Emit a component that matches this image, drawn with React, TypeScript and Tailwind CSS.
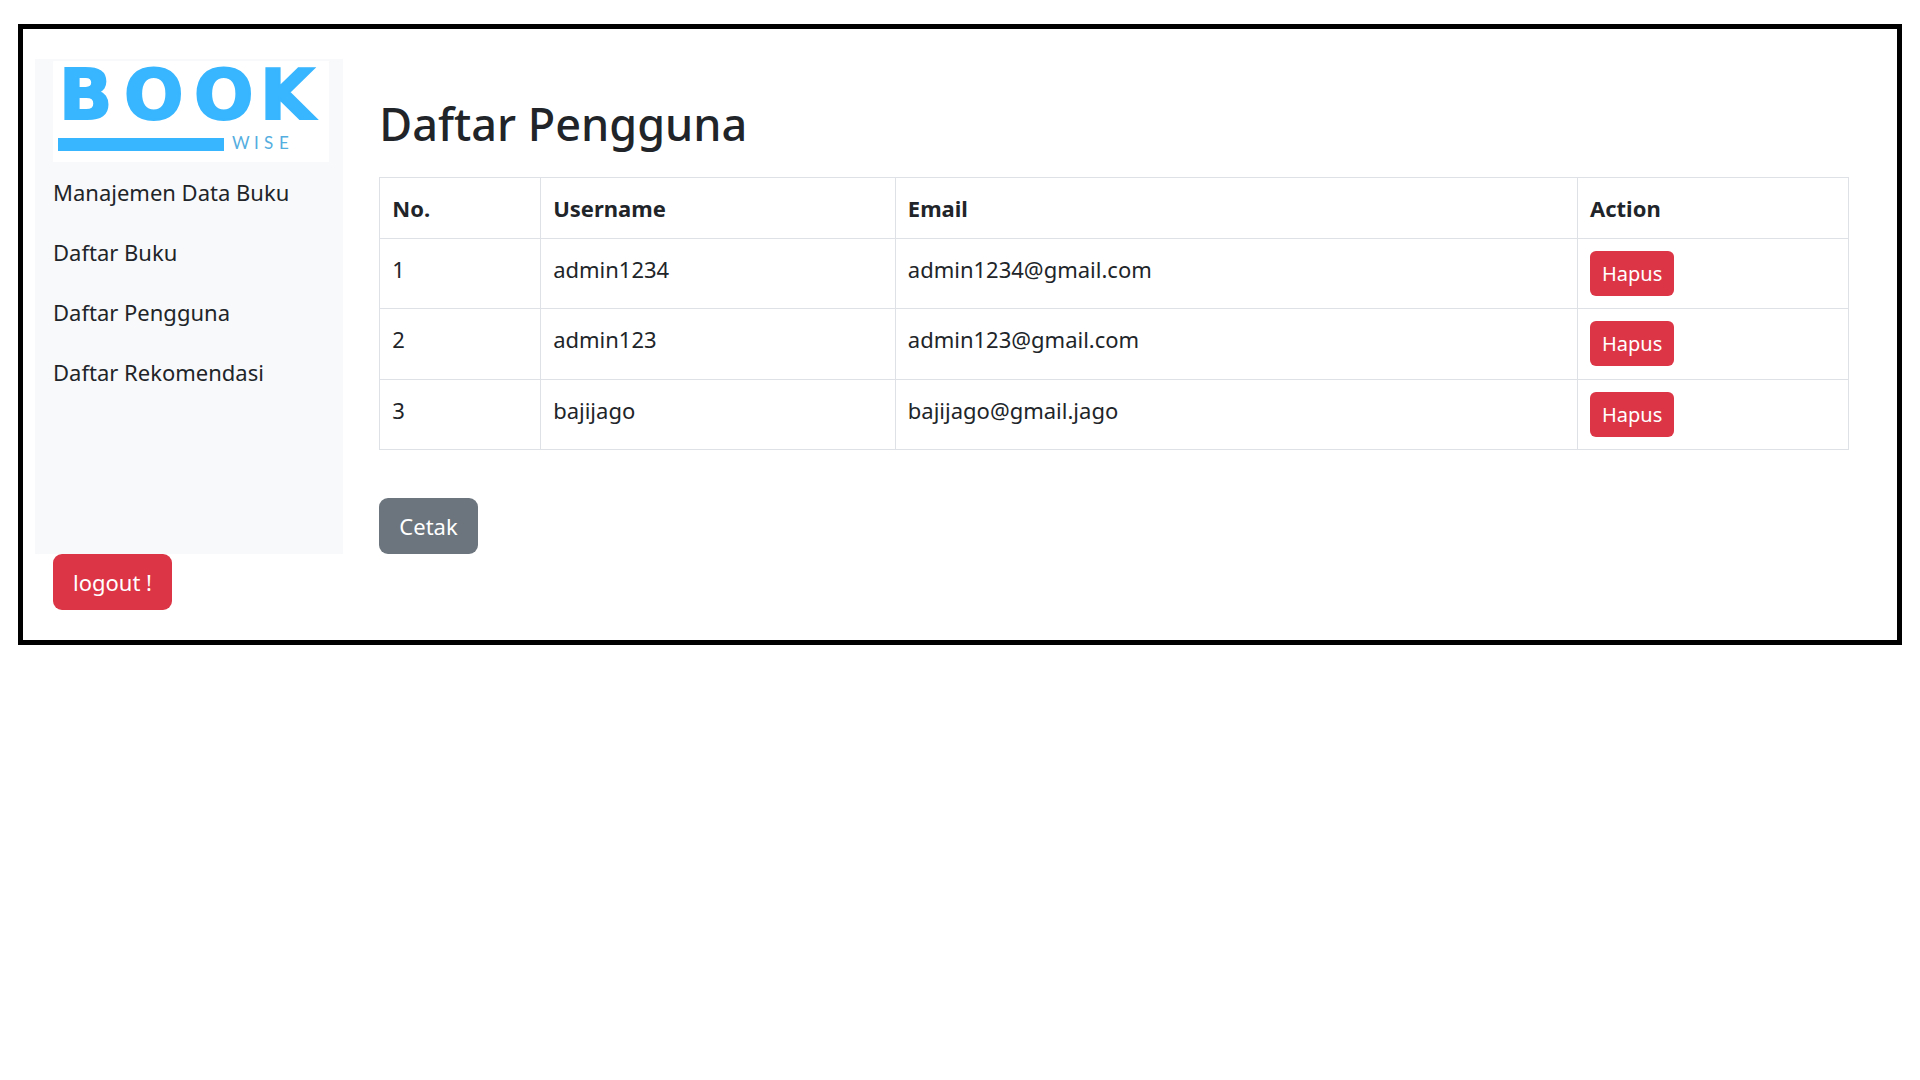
const menu = ["Manajemen Data Buku", "Daftar Buku", "Daftar Pengguna", "Daftar Rekomendasi"];

const users = [
  { id: 1, username: "admin1234", email: "admin1234@gmail.com" },
  { id: 2, username: "admin123", email: "admin123@gmail.com" },
  { id: 3, username: "bajijago", email: "bajijago@gmail.jago" },
];

function Logo() {
  return (
    <svg viewBox="0 0 276 101" className="block w-[276px] max-w-full overflow-visible bg-white" role="img" aria-label="BOOK WISE">
      <text
        y="58"
        x="6 71 141 207"
        fill="#38b6ff"
        stroke="#38b6ff"
        strokeWidth="2"
        fontFamily="DejaVu Sans, sans-serif"
        fontWeight="700"
        fontSize="70"
      >
        BOOK
      </text>
      <rect x="5" y="77" width="166" height="13" fill="#38b6ff" />
      <text y="88" x="179 201 211 226" fill="#55aee0" fontFamily="Lato, sans-serif" fontWeight="400" fontSize="17">
        WISE
      </text>
    </svg>
  );
}

function Sidebar() {
  return (
    <aside className="w-1/6 shrink-0 bg-[#f8f9fa] pt-0.5 pl-[18px]">
      <Logo />
      <nav>
        <ul>
          {menu.map((label) => (
            <li key={label}>
              <a href="#" className="block py-3 whitespace-nowrap">
                {label}
              </a>
            </li>
          ))}
        </ul>
      </nav>
    </aside>
  );
}

const cell = "border border-[#dee2e6] p-3 text-left align-top";

function UserTable() {
  return (
    <table className="h-[273px] w-full table-fixed border-collapse">
      <colgroup>
        <col className="w-[10.95%]" />
        <col className="w-[24.15%]" />
        <col className="w-[46.45%]" />
        <col className="w-[18.45%]" />
      </colgroup>
      <thead>
        <tr>
          <th className={cell}>No.</th>
          <th className={cell}>Username</th>
          <th className={cell}>Email</th>
          <th className={cell}>Action</th>
        </tr>
      </thead>
      <tbody>
        {users.map((user) => (
          <tr key={user.id}>
            <td className={cell}>{user.id}</td>
            <td className={cell}>{user.username}</td>
            <td className={cell}>{user.email}</td>
            <td className={cell}>
              <button type="button" className="block rounded-md bg-[#dc3545] px-3 py-1.5 text-[20px] leading-[33px] text-white">
                Hapus
              </button>
            </td>
          </tr>
        ))}
      </tbody>
    </table>
  );
}

export default function App() {
  return (
    <div className="px-[18px] py-6 font-['Noto_Sans','Open_Sans',sans-serif] text-[22px] leading-9 text-[#212529]">
      <div className="border-[5px] border-black px-3 py-[30px]">
        <div className="flex">
          <Sidebar />
          <main className="min-w-0 flex-1 px-9 pt-9">
            <h1 className="mb-6 text-[45px] leading-[58px] font-medium">Daftar Pengguna</h1>
            <UserTable />
            <button type="button" className="mt-12 block rounded-[9px] bg-[#6c757d] px-5 py-2.5 text-white">
              Cetak
            </button>
          </main>
        </div>
        <button type="button" className="ml-[18px] block rounded-[9px] bg-[#dc3545] px-5 py-2.5 text-white">
          logout !
        </button>
      </div>
    </div>
  );
}
